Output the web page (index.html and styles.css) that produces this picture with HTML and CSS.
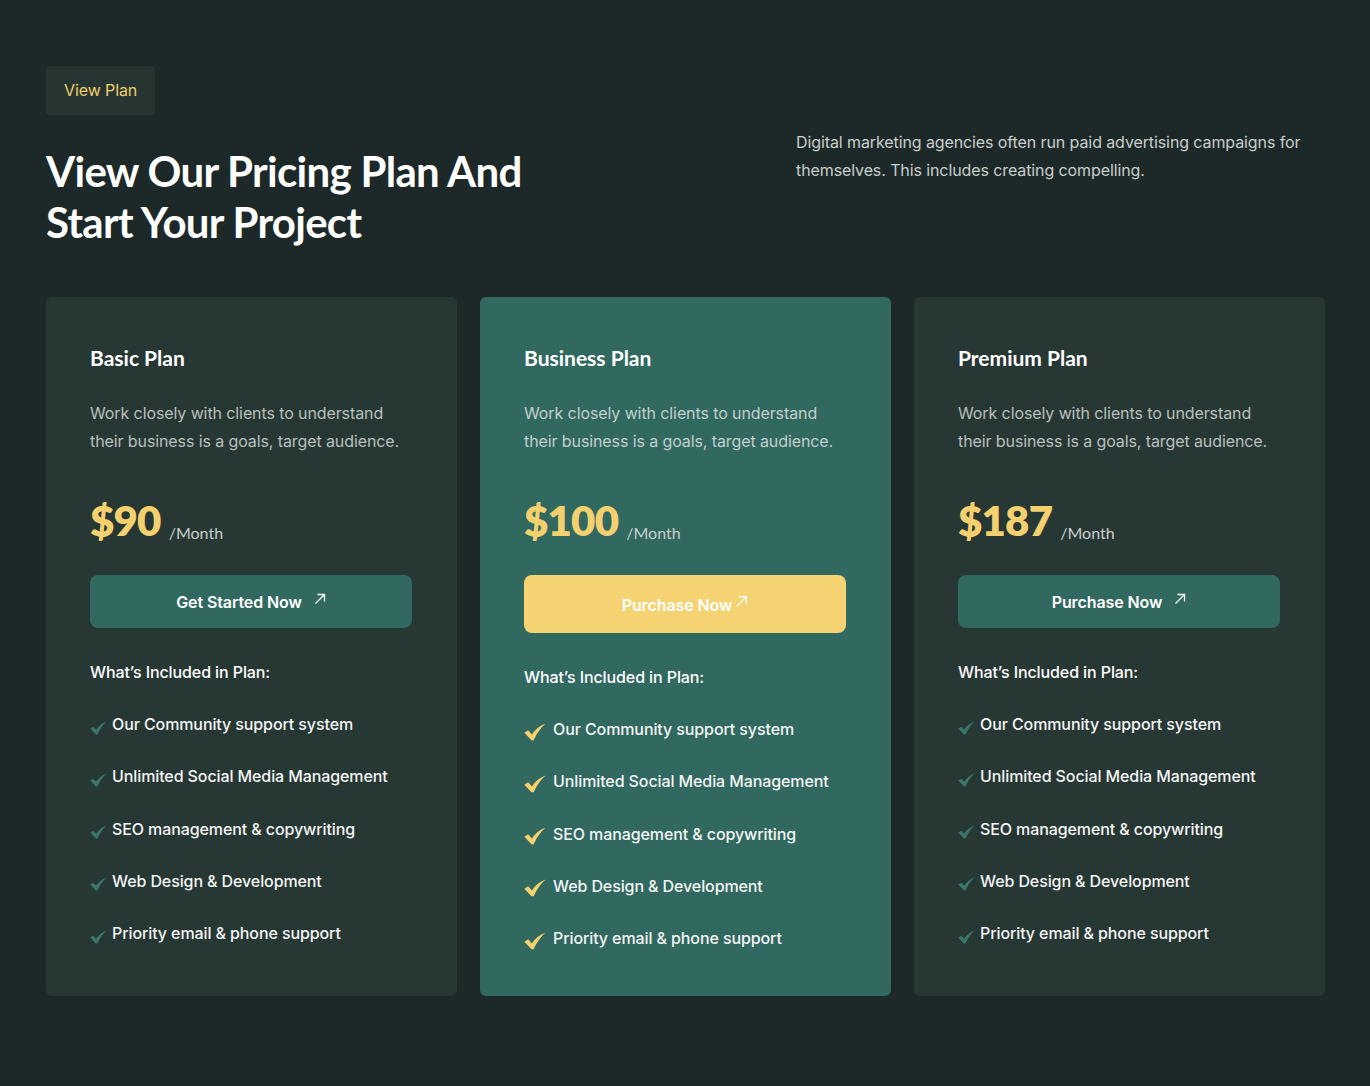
FILE: index.html
```html
<!DOCTYPE html>
<html lang="en">
<head>
<meta charset="utf-8">
<title>Pricing</title>
<link rel="stylesheet" href="styles.css">
</head>
<body>
<section class="pricing">
  <div class="head">
    <div class="head-left">
      <span class="badge">View Plan</span>
      <h2 class="title">View Our Pricing Plan And<br>Start Your Project</h2>
    </div>
    <p class="intro">Digital marketing agencies often run paid advertising campaigns for themselves. This includes creating compelling.</p>
  </div>

  <div class="cards">
    <div class="card">
      <h3 class="plan">Basic Plan</h3>
      <p class="desc">Work closely with clients to understand their business is a goals, target audience.</p>
      <div class="price"><span class="amount">$90</span><span class="per">/Month</span></div>
      <a class="btn">Get Started Now <svg class="arrow" viewBox="0 0 12 12"><path d="M1.5 10.5 L10.5 1.5 M3.5 1.5 H10.5 V8.5"/></svg></a>
      <h4 class="inc">What’s Included in Plan:</h4>
      <ul class="list">
        <li><svg class="check" viewBox="0 0 20 16"><path d="M0.3 8.6 L3.8 6.4 L7.2 10.2 C10 5.8 14 2.4 19.7 0.3 C15.4 4 11.8 8.8 8.8 15.6 L6.8 15.6 Z"/></svg>Our Community support system</li>
        <li><svg class="check" viewBox="0 0 20 16"><path d="M0.3 8.6 L3.8 6.4 L7.2 10.2 C10 5.8 14 2.4 19.7 0.3 C15.4 4 11.8 8.8 8.8 15.6 L6.8 15.6 Z"/></svg>Unlimited Social Media Management</li>
        <li><svg class="check" viewBox="0 0 20 16"><path d="M0.3 8.6 L3.8 6.4 L7.2 10.2 C10 5.8 14 2.4 19.7 0.3 C15.4 4 11.8 8.8 8.8 15.6 L6.8 15.6 Z"/></svg>SEO management &amp; copywriting</li>
        <li><svg class="check" viewBox="0 0 20 16"><path d="M0.3 8.6 L3.8 6.4 L7.2 10.2 C10 5.8 14 2.4 19.7 0.3 C15.4 4 11.8 8.8 8.8 15.6 L6.8 15.6 Z"/></svg>Web Design &amp; Development</li>
        <li><svg class="check" viewBox="0 0 20 16"><path d="M0.3 8.6 L3.8 6.4 L7.2 10.2 C10 5.8 14 2.4 19.7 0.3 C15.4 4 11.8 8.8 8.8 15.6 L6.8 15.6 Z"/></svg>Priority email &amp; phone support</li>
      </ul>
    </div>

    <div class="card featured">
      <h3 class="plan">Business Plan</h3>
      <p class="desc">Work closely with clients to understand their business is a goals, target audience.</p>
      <div class="price"><span class="amount">$100</span><span class="per">/Month</span></div>
      <a class="btn">Purchase Now<svg class="arrow" viewBox="0 0 12 12"><path d="M1.5 10.5 L10.5 1.5 M3.5 1.5 H10.5 V8.5"/></svg></a>
      <h4 class="inc">What’s Included in Plan:</h4>
      <ul class="list">
        <li><svg class="check" viewBox="0 0 20 16"><path d="M0.3 8.6 L3.8 6.4 L7.2 10.2 C10 5.8 14 2.4 19.7 0.3 C15.4 4 11.8 8.8 8.8 15.6 L6.8 15.6 Z"/></svg>Our Community support system</li>
        <li><svg class="check" viewBox="0 0 20 16"><path d="M0.3 8.6 L3.8 6.4 L7.2 10.2 C10 5.8 14 2.4 19.7 0.3 C15.4 4 11.8 8.8 8.8 15.6 L6.8 15.6 Z"/></svg>Unlimited Social Media Management</li>
        <li><svg class="check" viewBox="0 0 20 16"><path d="M0.3 8.6 L3.8 6.4 L7.2 10.2 C10 5.8 14 2.4 19.7 0.3 C15.4 4 11.8 8.8 8.8 15.6 L6.8 15.6 Z"/></svg>SEO management &amp; copywriting</li>
        <li><svg class="check" viewBox="0 0 20 16"><path d="M0.3 8.6 L3.8 6.4 L7.2 10.2 C10 5.8 14 2.4 19.7 0.3 C15.4 4 11.8 8.8 8.8 15.6 L6.8 15.6 Z"/></svg>Web Design &amp; Development</li>
        <li><svg class="check" viewBox="0 0 20 16"><path d="M0.3 8.6 L3.8 6.4 L7.2 10.2 C10 5.8 14 2.4 19.7 0.3 C15.4 4 11.8 8.8 8.8 15.6 L6.8 15.6 Z"/></svg>Priority email &amp; phone support</li>
      </ul>
    </div>

    <div class="card">
      <h3 class="plan">Premium Plan</h3>
      <p class="desc">Work closely with clients to understand their business is a goals, target audience.</p>
      <div class="price"><span class="amount">$187</span><span class="per">/Month</span></div>
      <a class="btn">Purchase Now <svg class="arrow" viewBox="0 0 12 12"><path d="M1.5 10.5 L10.5 1.5 M3.5 1.5 H10.5 V8.5"/></svg></a>
      <h4 class="inc">What’s Included in Plan:</h4>
      <ul class="list">
        <li><svg class="check" viewBox="0 0 20 16"><path d="M0.3 8.6 L3.8 6.4 L7.2 10.2 C10 5.8 14 2.4 19.7 0.3 C15.4 4 11.8 8.8 8.8 15.6 L6.8 15.6 Z"/></svg>Our Community support system</li>
        <li><svg class="check" viewBox="0 0 20 16"><path d="M0.3 8.6 L3.8 6.4 L7.2 10.2 C10 5.8 14 2.4 19.7 0.3 C15.4 4 11.8 8.8 8.8 15.6 L6.8 15.6 Z"/></svg>Unlimited Social Media Management</li>
        <li><svg class="check" viewBox="0 0 20 16"><path d="M0.3 8.6 L3.8 6.4 L7.2 10.2 C10 5.8 14 2.4 19.7 0.3 C15.4 4 11.8 8.8 8.8 15.6 L6.8 15.6 Z"/></svg>SEO management &amp; copywriting</li>
        <li><svg class="check" viewBox="0 0 20 16"><path d="M0.3 8.6 L3.8 6.4 L7.2 10.2 C10 5.8 14 2.4 19.7 0.3 C15.4 4 11.8 8.8 8.8 15.6 L6.8 15.6 Z"/></svg>Web Design &amp; Development</li>
        <li><svg class="check" viewBox="0 0 20 16"><path d="M0.3 8.6 L3.8 6.4 L7.2 10.2 C10 5.8 14 2.4 19.7 0.3 C15.4 4 11.8 8.8 8.8 15.6 L6.8 15.6 Z"/></svg>Priority email &amp; phone support</li>
      </ul>
    </div>
  </div>
</section>
</body>
</html>
```

FILE: styles.css
```css
* { box-sizing: border-box; }

html, body {
  margin: 0;
  padding: 0;
  background: #1d2928;
}

body {
  font-family: Inter, "Noto Sans", "Liberation Sans", sans-serif;
  color: #ffffff;
  height: 1086px;
  overflow: hidden;
  letter-spacing: -0.1px;
}

.pricing {
  padding: 66px 45px 0 46px;
}

.head {
  display: flex;
  justify-content: space-between;
  align-items: flex-start;
}

.head-left {
  display: flex;
  flex-direction: column;
  align-items: flex-start;
}

.badge {
  display: inline-block;
  background: #273532;
  color: #f2cf6e;
  font-size: 16px;
  line-height: 20px;
  padding: 14px 18px 15px 18px;
  border-radius: 4px;
}

.title {
  margin: 31px 0 0 0;
  font-family: Lato, "Open Sans", sans-serif;
  font-weight: 700;
  font-size: 42px;
  line-height: 51px;
  letter-spacing: -0.7px;
  color: #ffffff;
}

.intro {
  width: 529px;
  margin: 62px 0 0 0;
  font-size: 16px;
  line-height: 28px;
  color: #c8cfcd;
}

.cards {
  display: grid;
  grid-template-columns: repeat(3, 1fr);
  gap: 23px;
  margin-top: 49px;
}

.card {
  background: #273734;
  border-radius: 6px;
  padding: 47px 45px 51px 44px;
}

.card.featured {
  background: #316860;
  padding-bottom: 45px;
}

.plan {
  margin: 0;
  font-family: Lato, "Open Sans", sans-serif;
  font-weight: 700;
  font-size: 21px;
  line-height: 28px;
  letter-spacing: 0;
  color: #ffffff;
}

.desc {
  margin: 27px 0 0 0;
  font-size: 16px;
  line-height: 28px;
  color: #b8c0be;
}

.featured .desc { color: #c2d0cc; }

.price {
  margin-top: 41px;
  display: flex;
  align-items: flex-end;
  gap: 8px;
}

.amount {
  font-family: Lato, "Open Sans", sans-serif;
  font-weight: 800;
  font-size: 42px;
  line-height: 48px;
  color: #f4d06f;
  letter-spacing: -0.8px;
}

.per {
  font-family: Lato, "Open Sans", sans-serif;
  font-size: 16px;
  line-height: 20px;
  margin-bottom: 1px;
  letter-spacing: 0;
  color: #c8cfcd;
}

.btn {
  margin-top: 31px;
  height: 53px;
  display: flex;
  align-items: center;
  justify-content: center;
  gap: 12px;
  background: #316860;
  border-radius: 8px;
  color: #ffffff;
  font-weight: 600;
  font-size: 16px;
}

.featured .btn {
  background: #f5d372;
  height: 58px;
  gap: 3px;
  padding-top: 2px;
}

.arrow {
  width: 12px;
  height: 12px;
  fill: none;
  stroke: #ffffff;
  stroke-width: 1.3;
  margin-top: -5px;
}

.featured .arrow {
  width: 13px;
  height: 13px;
  margin-top: -8px;
}

.inc {
  margin: 32px 0 0 0;
  font-weight: 500;
  font-size: 16px;
  line-height: 24px;
  color: #ffffff;
}

.list {
  list-style: none;
  margin: 28px 0 0 0;
  padding: 0;
  display: flex;
  flex-direction: column;
  gap: 28.3px;
}

.list li {
  display: flex;
  align-items: center;
  font-weight: 500;
  font-size: 16px;
  line-height: 24px;
  color: #f4f6f5;
}

.check {
  width: 17px;
  height: 14px;
  fill: #3a786d;
  margin-right: 5px;
  margin-top: 7px;
  flex-shrink: 0;
}

.featured .check {
  width: 22px;
  height: 18px;
  fill: #f4d06f;
  margin-right: 7px;
  margin-top: 5px;
}
```
